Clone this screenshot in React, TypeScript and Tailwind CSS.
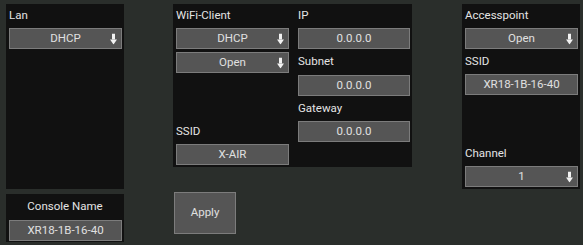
import React from 'react';

const font = { fontFamily: 'Roboto, "Noto Sans", sans-serif' };

// 粗的下箭头
const DownArrow = () => (
  <svg width="7" height="11" viewBox="0 0 7 11" className="absolute right-[4px] top-1/2 -translate-y-1/2">
    <rect x="2" y="0" width="3" height="6" fill="#f2f2f2" />
    <polygon points="0,6 7,6 3.5,11" fill="#f2f2f2" />
  </svg>
);

const Box = ({ text, dropdown = false, w = 'w-[113px]' }: { text: string; dropdown?: boolean; w?: string }) => (
  <div
    className={`relative ${w} h-[21px] bg-[#555555] border border-[#7c7c7c] flex items-center justify-center text-[11.5px] text-[#e0e0e0]`}
  >
    {text}
    {dropdown && <DownArrow />}
  </div>
);

const Label = ({ text, h = 'h-[24px]', center = false }: { text: string; h?: string; center?: boolean }) => (
  <div className={`${h} flex items-center text-[11.5px] text-[#e4e4e4] ${center ? 'justify-center' : ''}`}>{text}</div>
);

export default function App() {
  return (
    <div style={font} className="w-[583px] h-[245px] bg-[#2a2e2b] flex pt-[4px] pl-[6px]">
      {/* Lan */}
      <div className="w-[118px] flex flex-col gap-[5px]">
        <div className="h-[185px] bg-[#111111] px-[3px]">
          <Label text="Lan" />
          <Box text="DHCP" dropdown />
        </div>
        <div className="h-[48px] bg-[#111111] px-[3px]">
          <Label text="Console Name" h="h-[26px]" center />
          <Box text="XR18-1B-16-40" />
        </div>
      </div>

      {/* WiFi-Client */}
      <div className="ml-[49px] w-[239px] flex flex-col">
        <div className="h-[163px] bg-[#111111] flex px-[3px] gap-[9px]">
          <div className="flex flex-col">
            <Label text="WiFi-Client" />
            <Box text="DHCP" dropdown />
            <div className="mt-[3px]">
              <Box text="Open" dropdown />
            </div>
            <div className="flex-1" />
            <Label text="SSID" h="h-[25px]" />
            <Box text="X-AIR" />
            <div className="h-[2px]" />
          </div>
          <div className="flex flex-col">
            <Label text="IP" />
            <Box text="0.0.0.0" w="w-[112px]" />
            <Label text="Subnet" h="h-[26px]" />
            <Box text="0.0.0.0" w="w-[112px]" />
            <Label text="Gateway" h="h-[25px]" />
            <Box text="0.0.0.0" w="w-[112px]" />
          </div>
        </div>
        <button className="mt-[25px] ml-[1px] w-[62px] h-[42px] bg-[#555555] border border-[#7c7c7c] text-[11.5px] text-[#e0e0e0]">
          Apply
        </button>
      </div>

      {/* Accesspoint */}
      <div className="ml-[50px] w-[118px] h-[185px] bg-[#111111] px-[3px] flex flex-col">
        <Label text="Accesspoint" />
        <Box text="Open" dropdown />
        <Label text="SSID" h="h-[25px]" />
        <Box text="XR18-1B-16-40" />
        <div className="flex-1" />
        <Label text="Channel" h="h-[25px]" />
        <Box text="1" dropdown />
        <div className="h-[2px]" />
      </div>
    </div>
  );
}
